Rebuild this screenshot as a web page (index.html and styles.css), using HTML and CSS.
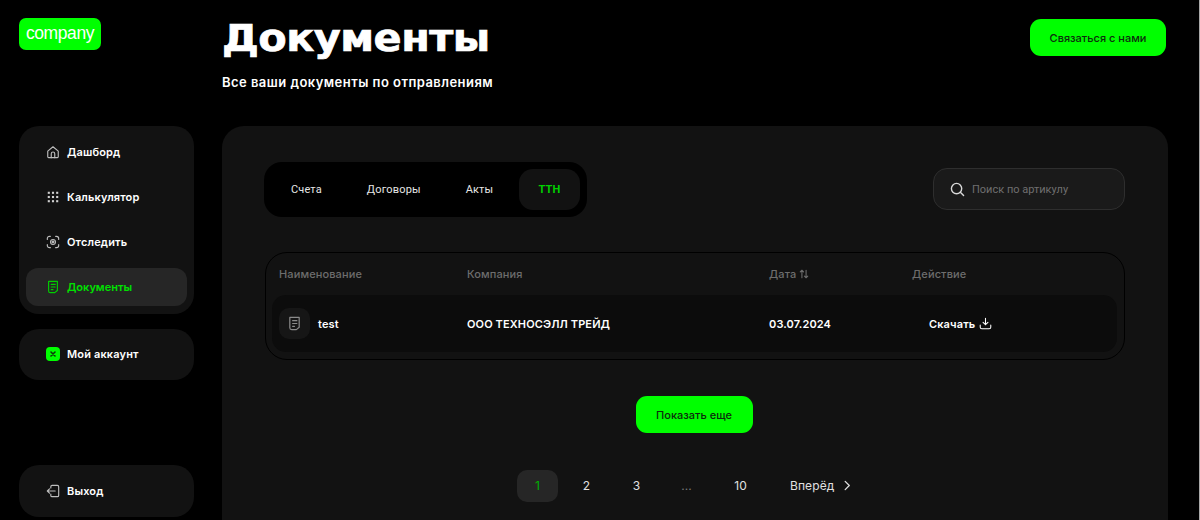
FILE: index.html
```html
<!DOCTYPE html>
<html lang="ru">
<head>
  <meta charset="UTF-8" />
  <title>Документы</title>
  <link rel="stylesheet" href="styles.css">
</head>
<body>
  <div class="page">
    <aside class="sidebar">
      <div class="logo">company</div>

      <nav class="side-card nav-main">
        <a class="nav-item">
          <svg class="nav-icon" viewBox="0 0 16 16"><path d="M2 7l6-5 6 5v6.500a1 1 0 0 1-1 1H3a1 1 0 0 1-1-1z"/><path d="M6 14.500V10a2 2 0 0 1 4 0v4.500"/></svg>
          Дашборд
        </a>
        <a class="nav-item">
          <svg class="nav-icon dots" viewBox="0 0 16 16"><rect x="2" y="2" width="2.400" height="2.400"/><rect x="6.800" y="2" width="2.400" height="2.400"/><rect x="11.600" y="2" width="2.400" height="2.400"/><rect x="2" y="6.800" width="2.400" height="2.400"/><rect x="6.800" y="6.800" width="2.400" height="2.400"/><rect x="11.600" y="6.800" width="2.400" height="2.400"/><rect x="2" y="11.600" width="2.400" height="2.400"/><rect x="6.800" y="11.600" width="2.400" height="2.400"/><rect x="11.600" y="11.600" width="2.400" height="2.400"/></svg>
          Калькулятор
        </a>
        <a class="nav-item">
          <svg class="nav-icon" viewBox="0 0 16 16"><path d="M1.500 5V4a2.500 2.500 0 0 1 2.500-2.500h1M11 1.500h1A2.500 2.500 0 0 1 14.500 4v1M14.500 11v1a2.500 2.500 0 0 1-2.500 2.500h-1M5 14.500H4A2.500 2.500 0 0 1 1.500 12v-1"/><circle cx="8" cy="8" r="2.800"/><circle class="fill" cx="8" cy="8" r="1"/></svg>
          Отследить
        </a>
        <a class="nav-item active">
          <svg class="nav-icon" viewBox="0 0 16 16"><path d="M3 1.500h10v10.500l-3 2.500H5a2 2 0 0 1-2-2z"/><path d="M6 5h4.500M6 8h4.500M6 11h2"/></svg>
          Документы
        </a>
      </nav>

      <div class="side-card single">
        <a class="nav-item">
          <span class="account-badge"><svg viewBox="0 0 10 10"><path d="M2.500 2.500l5 5M7.500 2.500l-5 5"/></svg></span>
          Мой аккаунт
        </a>
      </div>

      <div class="side-card single exit">
        <a class="nav-item">
          <svg class="nav-icon" viewBox="0 0 16 16"><path d="M5.500 4.500V3a1.500 1.500 0 0 1 1.500-1.500h6A1.500 1.500 0 0 1 14.500 3v10a1.500 1.500 0 0 1-1.500 1.500H7A1.500 1.500 0 0 1 5.500 13v-1.500"/><path d="M10.500 8H1.500M4 5.500L1.500 8 4 10.500"/></svg>
          Выход
        </a>
      </div>
    </aside>

    <main class="content">
      <header class="top">
        <div>
          <h1>Документы</h1>
          <p class="subtitle">Все ваши документы по отправлениям</p>
        </div>
        <button class="green-btn contact">Связаться с нами</button>
      </header>

      <section class="panel">
        <div class="toolbar">
          <div class="tabs">
            <span class="tab">Счета</span>
            <span class="tab">Договоры</span>
            <span class="tab">Акты</span>
            <span class="tab current">ТТН</span>
          </div>
          <label class="search">
            <svg viewBox="0 0 16 16"><circle cx="7" cy="7" r="5.500"/><path d="M11 11l3.500 3.500"/></svg>
            <span>Поиск по артикулу</span>
          </label>
        </div>

        <div class="docs">
          <div class="docs-row docs-head">
            <span>Наименование</span>
            <span>Компания</span>
            <span class="sort">Дата
              <svg viewBox="0 0 12 12"><path d="M3.500 10.500v-9M1.500 3.500l2-2 2 2M8.500 1.500v9M6.500 8.500l2 2 2-2"/></svg>
            </span>
            <span>Действие</span>
          </div>
          <div class="docs-row docs-item">
            <span class="doc-name">
              <span class="doc-icon"><svg viewBox="0 0 16 16"><path d="M3 1.500h10v10.500l-3 2.500H5a2 2 0 0 1-2-2z"/><path d="M6 5h4.500M6 8h4.500M6 11h2"/></svg></span>
              test
            </span>
            <span>ООО ТЕХНОСЭЛЛ ТРЕЙД</span>
            <span>03.07.2024</span>
            <a class="download">Скачать
              <svg viewBox="0 0 16 16"><path d="M8 1.500v8M5 6.500l3 3 3-3M1.500 10v2.500a2 2 0 0 0 2 2h9a2 2 0 0 0 2-2V10"/></svg>
            </a>
          </div>
        </div>

        <div class="more">
          <button class="green-btn">Показать еще</button>
        </div>

        <div class="pager">
          <span class="page-num current">1</span>
          <span class="page-num">2</span>
          <span class="page-num">3</span>
          <span class="page-num dim">...</span>
          <span class="page-num last">10</span>
          <a class="next">Вперёд
            <svg viewBox="0 0 8 12"><path d="M2 1.500L6.500 6 2 10.500"/></svg>
          </a>
        </div>
      </section>
    </main>
  </div>
</body>
</html>
```

FILE: styles.css
```css
:root { --green: #00ff00; --panel: #121212; --row: #0c0c0c; --muted: #6d6d6d; }
* { box-sizing: border-box; }
html, body { height: 100%; }
body { margin: 0; background: #000; color: #fff; font-family: "Inter", "Noto Sans", sans-serif; overflow: hidden; border-right: 1px solid #a8a8a8; }
svg { fill: none; stroke: currentColor; stroke-width: 1.3; stroke-linecap: round; stroke-linejoin: round; }

.page { display: flex; height: 520px; padding-left: 19px; }

.sidebar { width: 175px; display: flex; flex-direction: column; padding: 18px 0 3px; flex-shrink: 0; }
.logo { width: 82px; height: 32px; background: var(--green); border-radius: 7px; font-family: "Liberation Sans", sans-serif; font-size: 17.500px; line-height: 30px; text-align: center; letter-spacing: -0.4px; margin-bottom: 76px; }
.side-card { background: var(--panel); border-radius: 20px; padding: 7px; }
.nav-main { height: 188px; }
.single { margin-top: 15px; height: 51px; padding-top: 6px; }
.exit { margin-top: auto; height: 52px; padding-top: 7px; }
.nav-item { display: flex; align-items: center; gap: 7px; height: 38px; padding-left: 20px; margin-bottom: 7px; font-size: 11px; font-weight: 600; letter-spacing: 0.15px; border-radius: 12px; color: #fff; }
.nav-item:last-child { margin-bottom: 0; }
.nav-item.active { background: #262626; color: #00e000; margin-top: 1px; letter-spacing: 0; }
.nav-icon { width: 14px; height: 14px; color: #bdbdbd; flex-shrink: 0; }
.active .nav-icon { color: #00d000; }
.dots { fill: #d0d0d0; stroke: none; }
.fill { fill: currentColor; }
.account-badge { width: 14px; height: 14px; border-radius: 4px; background: var(--green); color: #0a3a0a; display: flex; align-items: center; justify-content: center; }
.account-badge svg { width: 8px; height: 8px; stroke-width: 2; }

.content { width: 946px; margin-left: 28px; flex-shrink: 0; }
.top { height: 126px; display: flex; justify-content: space-between; align-items: flex-start; padding-top: 19px; }
h1 { margin: 0; font-family: "DejaVu Sans", sans-serif; font-size: 38px; font-weight: 700; line-height: 38px; letter-spacing: -0.5px; -webkit-text-stroke: 0.7px #fff; transform: scaleX(1.09); transform-origin: left center; }
.subtitle { margin: 16px 0 0; font-size: 13px; font-weight: 600; line-height: 18px; letter-spacing: 0.46px; }
.green-btn { background: var(--green); color: #0d2b0d; border: none; border-radius: 11px; font-family: inherit; font-size: 11px; font-weight: 500; height: 37px; padding: 0 20px; }
.contact { margin-right: 2px; width: 136px; padding: 0; }

.panel { background: var(--panel); border-radius: 22px 22px 0 0; height: 394px; padding: 36px 43px 0 42px; }
.toolbar { display: flex; justify-content: space-between; align-items: flex-start; }
.tabs { display: flex; align-items: center; gap: 5px; background: #000; border-radius: 18px; height: 55px; padding: 0 7px; width: 323px; font-family: "Roboto", sans-serif; font-size: 11px; letter-spacing: 0.15px; }
.tab { height: 41px; line-height: 41px; padding: 0 20px; color: #e6e6e6; flex-shrink: 0; }
.tab.current { background: var(--panel); color: #00d000; font-weight: 700; border-radius: 14px; margin-left: auto; padding: 0; width: 61px; text-align: center; }
.search { display: flex; align-items: center; gap: 7px; width: 192px; height: 42px; margin-top: 6px; padding-left: 16px; background: #1a1a1a; border: 1px solid #2e2e2e; border-radius: 14px; font-family: "Roboto", sans-serif; font-size: 11px; color: #6f6f6f; }
.search svg { width: 15px; height: 15px; color: #d8d8d8; stroke-width: 1.5; }

.docs { margin: 35px 0 0 1px; border: 1px solid #000; border-radius: 22px; height: 108px; padding: 0 7px 0 6px; }
.docs-row { display: grid; grid-template-columns: 188px 302px 143px 1fr; align-items: center; padding-left: 7px; font-size: 11px; letter-spacing: 0.12px; }
.docs-head { height: 42px; color: var(--muted); font-weight: 500; }
.sort { display: flex; align-items: center; gap: 3px; }
.sort svg { width: 10px; height: 10px; }
.docs-item { height: 57px; background: var(--row); border-radius: 14px; font-weight: 600; }
.doc-name { display: flex; align-items: center; gap: 8px; }
.doc-icon { width: 31px; height: 31px; border-radius: 10px; background: #161616; color: #8a8a8a; display: flex; align-items: center; justify-content: center; }
.doc-icon svg { width: 15px; height: 15px; }
.download { display: flex; align-items: center; gap: 4px; margin-left: 17px; }
.download svg { width: 13px; height: 13px; }

.more { display: flex; justify-content: center; margin-top: 36px; padding-right: 1px; }
.more .green-btn { width: 117px; padding: 0; }

.pager { display: flex; align-items: center; margin-top: 37px; font-size: 12px; height: 32px; color: #e0e0e0; padding-left: 253px; }
.page-num { width: 41px; height: 32px; line-height: 32px; text-align: center; border-radius: 10px; margin-right: 9px; }
.page-num.current { background: #262626; color: #00b000; margin-right: 8px; }
.page-num.dim { color: #777; }
.page-num.last { margin-left: 4px; }
.next { display: flex; align-items: center; gap: 9px; margin-left: 20px; padding-bottom: 2px; letter-spacing: 0.1px; }
.next svg { width: 8px; height: 11px; stroke-width: 1.4; }
```
